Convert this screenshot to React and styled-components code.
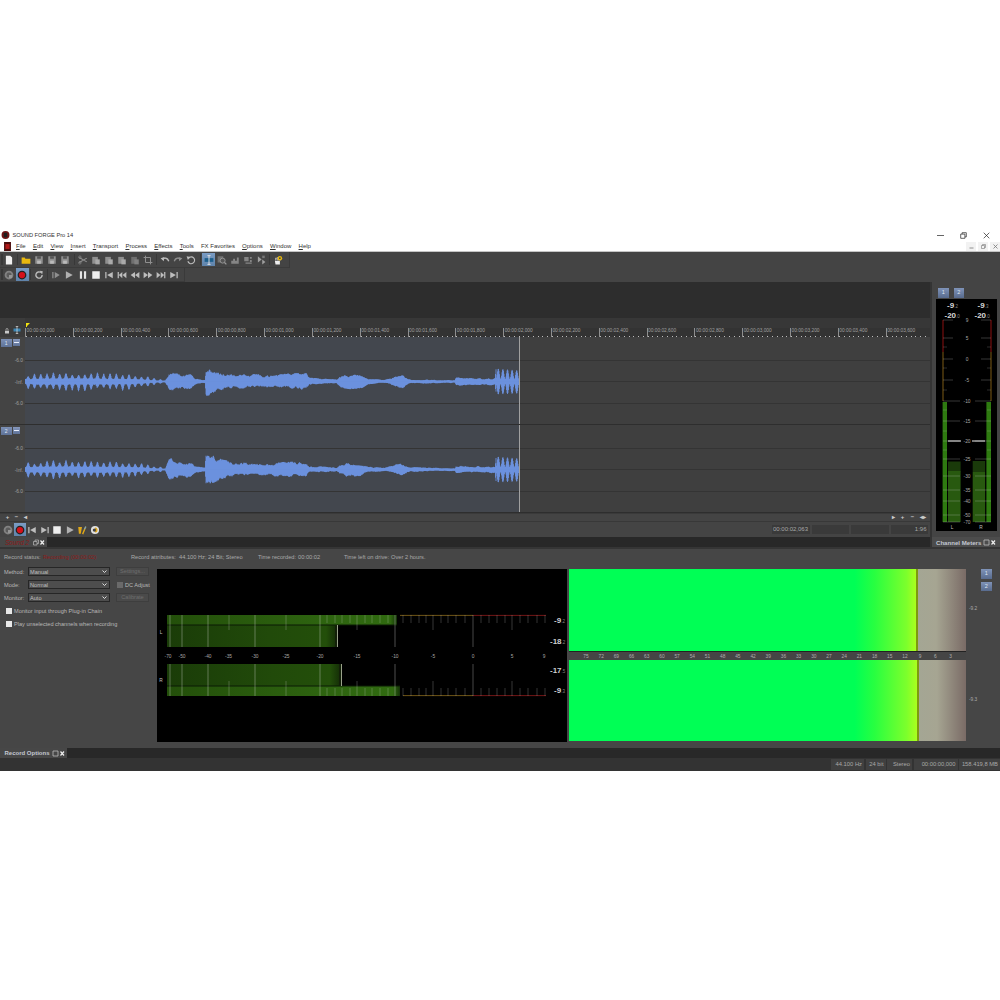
import React from "react";
import styled, { createGlobalStyle } from "styled-components";

const Global = createGlobalStyle`
  html, body { margin: 0; padding: 0; background: #fff; }
  body { font-family: "Liberation Sans", Arial, sans-serif; }
  * { box-sizing: border-box; }
`;

const Page = styled.div`
  width: 1000px; height: 1000px; padding-top: 229px; background: #fff; overflow: hidden;
`;
const TitleBar = styled.div`
  height: 12px; display: flex; align-items: center; padding-left: 1px; color: #333; font-size: 5.7px; gap: 2.5px; position: relative;
`;
const TitleControls = styled.div`
  margin-left: auto; display: flex; height: 100%; align-items: center; padding-right: 2px;
`;
const WinBtn = styled.div`
  width: 23px; display: flex; justify-content: center; align-items: center; color: #222;
`;
const MenuBar = styled.div`
  height: 11px; display: flex; align-items: center; padding-left: 4px; font-size: 6px; color: #333; gap: 7.2px; border-bottom: 1px solid #c4c4c4;
`;
const MenuLogo = styled.svg`
  margin-right: -2.2px; flex: none;
`;
const MenuItem = styled.span`
  line-height: 10px; u { text-decoration-thickness: 0.5px; text-underline-offset: 0.8px; }
`;
const MdiControls = styled.div`
  margin-left: auto; display: flex; gap: 2px;
`;
const MdiBtn = styled.div`
  width: 10px; height: 9px; background: #f2f2f2; display: flex; align-items: center; justify-content: center;
`;
const ToolRow = styled.div`
  height: ${p => p.$h}px; background: #444; display: flex;
`;
const ToolGroup = styled.div`
  display: flex; align-items: center; height: 100%; border-right: 1px solid #3a3a3a; border-bottom: 1px solid #3b3b3b; padding-right: ${p => p.$pr || 0}px;
`;
const Grip = styled.div`
  width: 2px; height: 11px; margin-left: 0.5px; background: #383838;
`;
const ToolBtn = styled.div`
  width: ${p => p.$w || 13.12}px; height: 13px; display: flex; align-items: center; justify-content: center; flex: none;
  background: ${p => (p.$active ? "linear-gradient(#7a9cc4,#5f83aa)" : "transparent")};
`;
const Sep = styled.div`
  width: 1px; height: 11px; margin: 0 1.5px; background: #383838; flex: none;
`;
const MainRow = styled.div`
  height: 265px; display: flex;
`;
const LeftCol = styled.div`
  width: 930px; display: flex; flex-direction: column;
`;
const Overview = styled.div`
  height: 36px; background: #2d2d2d;
`;
const RulerWrap = styled.div`
  height: 19px; display: flex;
`;
const RulerGutter = styled.div`
  width: 25px; background: #3b3b3b; display: flex; align-items: flex-end; justify-content: space-around; padding: 0 2px 3px 2px;
`;
const RulerCol = styled.div`
  flex: 1; display: flex; flex-direction: column; min-width: 0;
`;
const RulerTop = styled.div`
  height: 10px; background: #373737; padding: 5px 0 0 1px; display: flex; align-items: flex-start;
`;
const Ruler = styled.div`
  height: 9px; background-color: #333; display: flex; overflow: hidden;
  background-image: repeating-linear-gradient(90deg, #bdbdbd 0 1px, transparent 1px 4.782px);
  background-size: 100% 1px; background-position: 1px 7.5px; background-repeat: no-repeat;
`;
const RulerCell = styled.div`
  width: 47.82px; flex: none; font-size: 4.8px; color: #a0a0a0; border-left: 1px solid #8f8f8f; height: 8.5px; line-height: 6px; padding-left: 0.5px; white-space: nowrap;
`;
const Track = styled.div`
  height: 88px; display: flex; border-bottom: 1px solid #2e2e2e;
`;
const Gutter = styled.div`
  width: 25px; background: #444; display: flex; flex-direction: column;
`;
const TrackHead = styled.div`
  height: 11px; padding: 1.5px 0 0 1px; display: flex; gap: 1px; align-items: flex-start;
`;
const TrackNum = styled.div`
  width: 10.5px; height: 8.5px; background: linear-gradient(#7c90b6,#5e7297); color: #dfe6f2; font-size: 5px; text-align: center; line-height: 8.5px;
`;
const TrackMin = styled.div`
  width: 7.5px; height: 7px; background: linear-gradient(#8698bd,#5e7297); display: flex; align-items: center; justify-content: center;
  &::after { content: ""; width: 4.5px; height: 1px; background: #e8eef8; }
`;
const DbList = styled.div`
  margin-top: 2px; display: flex; flex-direction: column; align-items: flex-end; padding-right: 2px;
`;
const DbLabel = styled.div`
  height: 21.5px; line-height: 21.5px; font-size: 4.8px; color: #a0a0a0;
`;
const TrackArea = styled.div`
  flex: 1; background: linear-gradient(90deg, #43474e 494px, #3f3f3f 494px); display: flex; min-width: 0;
`;
const ScrollRow = styled.div`
  height: 9px; background: #444; display: flex; align-items: center; padding: 0 3px; color: #ccc; font-size: 6px; font-weight: bold; border-top: 1px solid #3a3a3a; border-bottom: 1px solid #383838;
`;
const ScrollGlyph = styled.span`
  width: ${p => p.$w || 9}px; text-align: center; line-height: 7px; flex: none;
`;
const ScrollSpace = styled.div`
  flex: 1; height: 100%;
`;
const TransportRow = styled.div`
  height: 15px; background: #444; display: flex; align-items: center; padding-left: 2px;
`;
const TimeBoxes = styled.div`
  margin-left: auto; display: flex; gap: 2px; padding-right: 2px;
`;
const TimeBox = styled.div`
  width: ${p => p.$w}px; height: 9px; background: #3a3a3a; font-size: 6px; color: #a8a8a8; line-height: 9px; text-align: right; padding-right: 1.5px;
`;
const TabRow = styled.div`
  height: ${p => p.$h || 10}px; background: #282828; display: flex; flex: none;
`;
const Tab = styled.div`
  width: ${p => p.$w}px; background: #474747; display: flex; align-items: center; padding-left: ${p => p.$pl || 4.5}px; gap: 2.5px; font-size: ${p => p.$fs || 6}px;
  color: ${p => p.$c || "#ccc"}; font-style: ${p => (p.$it ? "italic" : "normal")}; font-weight: ${p => (p.$b ? "bold" : "normal")}; white-space: nowrap;
`;
const RightCol = styled.div`
  width: 70px; background: #444; border-left: 2px solid #343434; display: flex; flex-direction: column;
`;
const MeterBtns = styled.div`
  height: 17px; padding: 6px 0 0 6px; display: flex; gap: 5px;
`;
const NumBtn = styled.div`
  width: 10.5px; height: 9.5px; background: linear-gradient(#7f93b8,#586b8e); color: #dfe6f2; font-size: 5.5px; text-align: center; line-height: 9.5px; flex: none;
`;
const ChannelBox = styled.div`
  margin-left: 4px; width: 61px; height: 232px; background: #000; line-height: 0;
`;
const ChannelTitle = styled(Tab)`
  margin-top: auto; width: 68px; height: 10px; flex: none; color: #c3c8d2; background: #4c4c4c; padding-left: 4px; gap: 2px; font-size: 6.1px;
`;
const RecordPanel = styled.div`
  height: 201px; background: #464646; border-top: 2px solid #353535; display: flex; flex-direction: column;
`;
const RecStatus = styled.div`
  height: 18px; flex: none; display: flex; align-items: center; padding: 0 0 2px 4px; font-size: 5.7px; color: #aaa; white-space: nowrap;
`;
const Stat = styled.span`
  width: ${p => p.$w}px; flex: none; color: ${p => p.$c || "#aaa"};
`;
const RecBody = styled.div`
  flex: 1; display: flex; align-items: flex-start; min-height: 0;
`;
const Form = styled.div`
  width: 157px; flex: none; padding-left: 4px; display: flex; flex-direction: column; gap: 4px; font-size: 5.6px; color: #b8b8b8;
`;
const FormRow = styled.div`
  height: 9px; display: flex; align-items: center;
`;
const FormLabel = styled.span`
  width: 24px; flex: none;
`;
const Select = styled.div`
  width: 82px; height: 9.5px; background: #4d4d4d; border: 1px solid #262626; color: #c0c0c0; display: flex; align-items: center; justify-content: space-between; padding: 0 2px 0 1px; flex: none;
`;
const GhostBtn = styled.div`
  margin-left: 6px; width: 33px; height: 9.5px; background: #4a4a4a; border: 1px solid #3e3e3e; color: #6f6f6f; text-align: center; line-height: 7.5px; flex: none;
`;
const Check = styled.div`
  width: 6px; height: 6px; background: ${p => (p.$dark ? "#6a6a6a" : "#e8e8e8")}; flex: none;
`;
const DcWrap = styled.div`
  margin-left: 7px; display: flex; align-items: center; gap: 2px;
`;
const CheckRow = styled.div`
  height: 9px; display: flex; align-items: center; gap: 2px; padding-left: 2px;
`;
const LevelBox = styled.div`
  width: 410px; height: 173px; background: #000; margin-top: 2px; flex: none; line-height: 0;
`;
const GreenBlock = styled.div`
  width: 397px; margin: 2px 0 0 2px; flex: none; display: flex; flex-direction: column;
`;
const GreenBar = styled.div`
  height: ${p => p.$h}px;
  background: linear-gradient(90deg, #00ff55 0, #00ff55 72%, #28ff40 77%, #7cff2c 85%, #aaff1e ${p => p.$e}px, #7d9a10 ${p => p.$e}px, #7d9a10 ${p => p.$e + 2}px, #a4a694 ${p => p.$e + 2}px, #a6a592 ${p => p.$e + 20}px, #7a6b66 100%);
`;
const ScaleRow = styled.div`
  height: 9px; border-top: 1px solid #222; display: flex; padding-left: 9.4px; font-size: 4.8px; color: #b0b0b0; line-height: 9px; background: #454545;
`;
const ScaleCell = styled.span`
  width: 15.2px; flex: none; text-align: center;
`;
const SideCol = styled.div`
  flex: 1; margin-top: 2px; display: flex; flex-direction: column; position: relative; padding-left: 15px; gap: 3px;
`;
const SideValue = styled.div`
  font-size: 4.8px; color: #aaa; position: absolute; left: 3px; top: ${p => p.$t}px;
`;
const BottomBar = styled.div`
  height: 13px; background: #333; display: flex; justify-content: flex-end; align-items: center; gap: 1.5px;
`;
const StatusCell = styled.div`
  width: ${p => p.$w}px; height: 11px; background: #404040; font-size: 5.8px; color: #a8a8a8; text-align: right; line-height: 11px; padding-right: 2px; white-space: nowrap;
`;

/* ---------- icons ---------- */
const Ico = ({ s = 10, children }) => (
  <svg width={s} height={s} viewBox="0 0 16 16">{children}</svg>
);
const G = "#8f8f8f";
const L = "#bdbdbd";
const Save = () => <Ico><path d="M2 2h12v12H2z" fill={G} /><path d="M5 2h6v4H5z" fill="#555" /><path d="M5 9h6v5H5z" fill="#bbb" /></Ico>;
const Paste = ({ dim }) => <Ico><path d="M2 3h9v11H2z" fill={dim ? "#6f6f6f" : G} /><path d="M7 7h7v8H7z" fill={dim ? "#808080" : "#aaa"} /></Ico>;
const Small = ({ d }) => <Ico><path d={d} fill="#858585" /></Ico>;
const Play = ({ c = L }) => <Ico><path d="M3 2l11 6-11 6z" fill={c} /></Ico>;
const BarPlay = () => <Ico><path d="M2 3h2v10H2zM6 3l8 5-8 5z" fill={G} /></Ico>;
const Pause = () => <Ico><path d="M3 2h3.5v12H3zM9.5 2H13v12H9.5z" fill="#e4e4e4" /></Ico>;
const Stop = () => <Ico><path d="M2 2h12v12H2z" fill="#eee" /></Ico>;
const Skip = ({ d }) => <Ico><path d={d} fill={L} /></Ico>;
const P = {
  first: "M2 3h2v10H2zM14 3v10L5 8z",
  last: "M12 3h2v10h-2zM2 3v10l9-5z",
  prevM: "M1 3h2v10H1zM8.5 3v10L3 8zM15 3v10L9 8z",
  rew: "M8 3v10L1 8zM15 3v10L8 8z",
  ff: "M1 3v10l7-5zM8 3v10l7-5z",
  nextM: "M15 3h-2v10h2zM7.5 3v10L13 8zM1 3v10l6-5z",
};
const Disc = () => <Ico s={10}><circle cx="8" cy="8" r="7" fill="#828282" /><circle cx="8" cy="8" r="4" fill="#5b5b5b" /><path d="M8 8h5v5H8z" fill="#969696" /></Ico>;
const Rec = () => <Ico s={10}><circle cx="8" cy="8" r="7" fill="#222" /><circle cx="8" cy="8" r="5" fill="#d4101a" /></Ico>;
const Loop = () => <Ico><path d="M13 8a5 5 0 1 1-2-4" fill="none" stroke={L} strokeWidth="2.2" /><path d="M9 1l5 1-1 5z" fill={L} /></Ico>;

const rnd = seed => { let s = seed; return () => (s = (s * 16807) % 2147483647) / 2147483647; };
const ENV = [
  [25, 8, 8], [40, 9, 10], [70, 10, 10], [100, 9, 10], [130, 8, 9], [145, 6, 6], [155, 3.5, 3.5], [166, 2.5, 2.5],
  [169, 9, 9], [173, 12, 9], [178, 8, 9], [190, 7, 7], [195, 3, 3], [205, 1.6, 1.6], [206, 14, 13], [214, 13, 12],
  [222, 9, 8.5], [235, 7, 6.5], [255, 7, 6], [270, 5.5, 6], [285, 7, 6.5], [306, 8, 7.5], [309, 3.5, 3], [325, 2.5, 2.5],
  [337, 1.8, 1.8], [340, 5.5, 5.5], [350, 6.5, 7], [362, 5.5, 6], [368, 2.5, 2.5], [385, 1.5, 1.5], [392, 3.5, 3.5], [402, 6, 6.5],
  [410, 2.2, 2.2], [430, 1.6, 1.6], [455, 1.4, 1.4], [456, 4, 4], [470, 3, 3], [495, 3, 3.5], [496, 13, 13], [519, 11, 12],
];
const envAt = x => {
  for (let i = 1; i < ENV.length; i++) {
    if (x <= ENV[i][0]) {
      const [a, u0, d0] = ENV[i - 1]; const [b, u1, d1] = ENV[i];
      const t = (x - a) / (b - a);
      return [u0 + (u1 - u0) * t, d0 + (d1 - d0) * t];
    }
  }
  return [0, 0];
};
const wavePath = (seed, cy) => {
  const r = rnd(seed);
  const spikesU = Array.from({ length: 40 }, () => 0.45 + 0.55 * r());
  const spikesD = Array.from({ length: 40 }, () => 0.4 + 0.6 * r());
  let d = "";
  let walkU = 0.9, walkD = 0.9;
  for (let x = 25; x < 519; x += 0.5) {
    const [u, l] = envAt(x);
    let mu, md;
    if (x < 166) {
      const pos = (x - 25) / 6.3;
      const k = Math.floor(pos);
      const ph = Math.abs(Math.sin(Math.PI * pos));
      const shape = Math.pow(ph, 5);
      mu = 0.26 + 0.07 * r() + 0.69 * shape * spikesU[k];
      md = 0.26 + 0.07 * r() + 0.69 * shape * spikesD[k + 1 > 39 ? 39 : k + 1];
    } else if (x > 496) {
      const ph = Math.abs(Math.sin((Math.PI * (x - 496)) / 4.6));
      mu = md = 0.2 + 0.8 * ph * ph;
    } else {
      walkU = Math.min(1.1, Math.max(0.66, walkU + (r() - 0.5) * 0.26));
      walkD = Math.min(1.1, Math.max(0.66, walkD + (r() - 0.5) * 0.26));
      mu = walkU; md = walkD;
    }
    d += `M${(x - 25).toFixed(1)} ${(cy - u * mu).toFixed(1)}V${(cy + l * md).toFixed(1)}`;
  }
  return d;
};
const Wave = ({ seed, lines }) => (
  <svg width="905" height="87" viewBox="0 0 905 87">
    {lines.map(y => <path key={y} d={`M0 ${y}H905`} stroke="#343434" strokeWidth="1" />)}
    <path d={wavePath(seed, 44.5)} stroke="#6e98ea" strokeWidth="0.8" fill="none" />
    <path d="M494.5 0V87" stroke="#a0a0a0" strokeWidth="1" />
  </svg>
);

const FONT = "Liberation Sans, sans-serif";

const ChannelMeter = () => {
  const scale = [["9", 320], ["5", 338], ["0", 359], ["-5", 380], ["-10", 401], ["-15", 421], ["-20", 441], ["-25", 459], ["-30", 476], ["-35", 490], ["-40", 501], ["-50", 515], ["-70", 522]];
  return (
    <svg width="61" height="232" viewBox="936 299 61 232" fontFamily={FONT}>
      {[[947, ".2"], [977.5, ".3"]].map(([x, b]) => (
        <text key={x} x={x} y="307.5" fontSize="8" fill="#d8d8d8" fontWeight="bold">-9<tspan fontSize="4.5" fill="#888" fontWeight="normal">{b}</tspan></text>
      ))}
      {[944.5, 974.5].map(x => (
        <text key={x} x={x} y="318" fontSize="8" fill="#d8d8d8" fontWeight="bold">-20<tspan fontSize="4.5" fill="#888" fontWeight="normal">.0</tspan></text>
      ))}
      <path d="M943 320V352M991 320V352" stroke="#8c1010" strokeWidth="1" />
      <path d="M943 352V401M991 352V401" stroke="#7d5a14" strokeWidth="1" />
      <rect x="942.6" y="402" width="4.4" height="120" fill="#2e7a10" />
      <rect x="986.4" y="402" width="4.6" height="120" fill="#2e7a10" />
      <rect x="948" y="461.5" width="12.6" height="10" fill="#1a3a0a" />
      <rect x="948" y="471" width="12.6" height="51" fill="#28590f" />
      <rect x="972.7" y="461" width="12.4" height="11" fill="#1a3a0a" />
      <rect x="972.7" y="472" width="12.4" height="50" fill="#28590f" />
      {scale.map(([t, y]) => (
        <g key={t}>
          <path d={`M943 ${y}H${t.length > 2 ? 960 : 953}M991 ${y}H${t.length > 2 ? 975 : 981}`} stroke="#cfcfcf" strokeOpacity=".45" strokeWidth=".6" />
          <text x="967" y={y + 1.7} fontSize="4.8" fill="#a8a8a8" textAnchor="middle">{t}</text>
        </g>
      ))}
      {[347, 368, 390, 410, 431, 450].map(y => (
        <path key={y} d={`M943 ${y}H947M991 ${y}H987`} stroke="#bbb" strokeOpacity=".45" strokeWidth=".5" />
      ))}
      <path d="M948 441H961M972 441H985" stroke="#f0f0f0" strokeWidth="1.1" />
      <text x="952" y="529" fontSize="4.8" fill="#bbb" textAnchor="middle">L</text>
      <text x="981" y="529" fontSize="4.8" fill="#bbb" textAnchor="middle">R</text>
    </svg>
  );
};

const LabelsH = [["-70", 168], ["-50", 182], ["-40", 208], ["-35", 228.5], ["-30", 255], ["-25", 286], ["-20", 320], ["-15", 357], ["-10", 395], ["-5", 433], ["0", 473], ["5", 512], ["9", 544]];
const tallX = [170, 182, 208, 255, 320, 395, 473];
const shortX = [229, 286, 357, 433, 512];
const fineL = [327, 335, 342, 350, 365, 372, 380, 388];
const fineR = [403, 411, 419, 426, 441, 448, 456, 465, 481, 489, 497, 505, 520, 528, 537, 545];

const MeterPair = ({ y0, flip, peakX, bandX }) => {
  const peakY = flip ? y0 + 22 : y0;
  const bandY = flip ? y0 : y0 + 10;
  const edgeY = flip ? y0 + 31.6 : y0 + 0.4;
  const tickA = flip ? y0 + 32 : y0;
  const dir = flip ? -1 : 1;
  return (
    <g>
      <rect x="167" y={peakY} width={peakX - 167} height="10" fill="url(#gp)" />
      <rect x="167" y={bandY} width={bandX - 167} height="22" fill="url(#gb)" />
      <path d={`M167 ${flip ? y0 + 22 : y0 + 10}H${peakX}`} stroke="#0b1a04" strokeWidth="1" />
      <path d={`M${peakX + 3} ${edgeY}H473`} stroke="#8a6a1c" strokeWidth=".8" />
      <path d={`M473 ${edgeY}H546`} stroke="#8e1c1c" strokeWidth=".8" />
      {tallX.map(x => <path key={x} d={`M${x} ${tickA}v${dir * 32}`} stroke="#e0e0e0" strokeOpacity={x > 395 ? 0.45 : 0.5} strokeWidth=".7" />)}
      {shortX.map(x => <path key={x} d={`M${x} ${tickA}v${dir * 15}`} stroke="#e0e0e0" strokeOpacity=".35" strokeWidth=".7" />)}
      {fineL.concat(fineR).map(x => <path key={x} d={`M${x} ${tickA}v${dir * 8}`} stroke="#e0e0e0" strokeOpacity=".38" strokeWidth=".6" />)}
      <rect x={bandX - 3} y={bandY} width="3" height="22" fill="#121f08" />
      <path d={`M${bandX - 0.5} ${bandY}v22`} stroke="#a9b09a" strokeWidth=".9" />
    </g>
  );
};

const Value = ({ x, y, a, b }) => (
  <text x={x} y={y} fontSize="8" fill="#cfcfcf" fontWeight="bold">{a}<tspan fontSize="4.5" fill="#888" fontWeight="normal">{b}</tspan></text>
);

const LevelMeter = () => (
  <svg width="410" height="173" viewBox="157 569 410 173" fontFamily={FONT}>
    <defs>
      <linearGradient id="gp" x1="0" x2="1" y1="0" y2="0">
        <stop offset="0" stopColor="#234f0a" /><stop offset=".7" stopColor="#2e6410" /><stop offset=".97" stopColor="#306a10" /><stop offset="1" stopColor="#143208" />
      </linearGradient>
      <linearGradient id="gb" x1="0" x2="1" y1="0" y2="0">
        <stop offset="0" stopColor="#1a3c08" /><stop offset=".6" stopColor="#214a0a" /><stop offset=".93" stopColor="#234f0a" /><stop offset="1" stopColor="#122806" />
      </linearGradient>
    </defs>
    <MeterPair y0={615} peakX={397} bandX={338} />
    <MeterPair y0={664} flip peakX={400} bandX={342} />
    {LabelsH.map(([t, x]) => <text key={t} x={x} y="657.5" fontSize="4.8" fill="#a8a8a8" textAnchor="middle">{t}</text>)}
    <text x="161" y="634" fontSize="4.8" fill="#c0c0c0" textAnchor="middle">L</text>
    <text x="161" y="682" fontSize="4.8" fill="#c0c0c0" textAnchor="middle">R</text>
    <Value x={554} y={623} a="-9" b=".2" />
    <Value x={550} y={643.5} a="-18" b=".2" />
    <Value x={550} y={673} a="-17" b=".5" />
    <Value x={554} y={693} a="-9" b=".3" />
  </svg>
);

const Chevron = () => (
  <svg width="5" height="4" viewBox="0 0 10 8"><path d="M1 1l4 4 4-4" fill="none" stroke="#ddd" strokeWidth="2" /></svg>
);
const TabIcons = ({ restore }) => (
  <svg width="13" height="7" viewBox="0 0 26 14">
    {restore
      ? <path d="M3 5h7v7H3zM6 5V2h7v7h-3" fill="none" stroke="#bbb" strokeWidth="1.4" />
      : <path d="M2 2h10v10H2z" fill="none" stroke="#bbb" strokeWidth="1.6" />}
    <path d="M17 3l7 8M24 3l-7 8" stroke="#eee" strokeWidth="2.4" />
  </svg>
);

const menu = [["F", "ile"], ["E", "dit"], ["V", "iew"], ["I", "nsert"], ["T", "ransport", 1], ["P", "rocess"], ["E", "ffects"], ["T", "ools"], ["FX Favorites", ""], ["O", "ptions"], ["W", "indow"], ["H", "elp"]];
const rulerLabels = ["00:00:00,000", "00:00:00,200", "00:00:00,400", "00:00:00,600", "00:00:00,800", "00:00:01,000", "00:00:01,200", "00:00:01,400", "00:00:01,600", "00:00:01,800", "00:00:02,000", "00:00:02,200", "00:00:02,400", "00:00:02,600", "00:00:02,800", "00:00:03,000", "00:00:03,200", "00:00:03,400", "00:00:03,600"];
const scaleNums = [75, 72, 69, 66, 63, 60, 57, 54, 51, 48, 45, 42, 39, 36, 33, 30, 27, 24, 21, 18, 15, 12, 9, 6, 3];

export default function App() {
  return (
    <Page>
      <Global />
      <TitleBar>
        <svg width="9" height="8" viewBox="0 0 16 14"><circle cx="8" cy="7" r="7" fill="#6e1414" /><path d="M5 3h6v8H5z" fill="#1d1d1d" /></svg>
        SOUND FORGE Pro 14
        <TitleControls>
          <WinBtn><svg width="7" height="7" viewBox="0 0 10 10"><path d="M0 5h10" stroke="#222" strokeWidth="1" /></svg></WinBtn>
          <WinBtn><svg width="7" height="7" viewBox="0 0 10 10"><path d="M1 3h6v6H1zM3 3V1h6v6H7" fill="none" stroke="#222" strokeWidth="1" /></svg></WinBtn>
          <WinBtn><svg width="7" height="7" viewBox="0 0 10 10"><path d="M1 1l8 8M9 1l-8 8" stroke="#222" strokeWidth="1" /></svg></WinBtn>
        </TitleControls>
      </TitleBar>
      <MenuBar>
        <MenuLogo width="7" height="9" viewBox="0 0 10 13"><path d="M0 0h10v13H0z" fill="#4a0d0d" /><path d="M2 3h6v7H2z" fill="#b01a1a" /></MenuLogo>
        {menu.map(([a, b]) => (
          <MenuItem key={a + b}>{b ? <><u>{a}</u>{b}</> : a}</MenuItem>
        ))}
        <MdiControls>
          <MdiBtn><svg width="5" height="5" viewBox="0 0 10 10"><path d="M1 8h8" stroke="#777" strokeWidth="1.6" /></svg></MdiBtn>
          <MdiBtn><svg width="5" height="5" viewBox="0 0 10 10"><path d="M1 3h6v6H1zM3 3V1h6v6H7" fill="none" stroke="#777" strokeWidth="1.2" /></svg></MdiBtn>
          <MdiBtn><svg width="5" height="5" viewBox="0 0 10 10"><path d="M1 1l8 8M9 1l-8 8" stroke="#777" strokeWidth="1.6" /></svg></MdiBtn>
        </MdiControls>
      </MenuBar>

      <ToolRow $h={16}>
        <ToolGroup $pr={4}>
          <Grip />
          <ToolBtn><Ico><path d="M3 1h7l3 3v11H3z" fill="#f0f0f0" /></Ico></ToolBtn>
          <Sep />
          <ToolBtn><Ico><path d="M1 4h5l1 2h8v8H1z" fill="#e8b810" /></Ico></ToolBtn>
          <ToolBtn><Save /></ToolBtn>
          <ToolBtn><Save /></ToolBtn>
          <ToolBtn><Save /></ToolBtn>
          <Sep />
          <ToolBtn><Ico><path d="M2 4l12 7M2 12l12-7" stroke={G} strokeWidth="1.8" /><circle cx="3" cy="3.5" r="2" fill="none" stroke={G} /><circle cx="3" cy="12.5" r="2" fill="none" stroke={G} /></Ico></ToolBtn>
          <ToolBtn><Paste /></ToolBtn>
          <ToolBtn><Paste /></ToolBtn>
          <ToolBtn><Paste /></ToolBtn>
          <ToolBtn><Paste dim /></ToolBtn>
          <ToolBtn><Ico><path d="M4 1v11h11M1 4h11v11" fill="none" stroke={G} strokeWidth="1.6" /></Ico></ToolBtn>
          <Sep />
          <ToolBtn><Ico><path d="M4 7c3-3 8-3 10 3" fill="none" stroke={L} strokeWidth="2.2" /><path d="M1 5l6-2-1 7z" fill={L} /></Ico></ToolBtn>
          <ToolBtn><Ico><path d="M12 7C9 4 4 4 2 10" fill="none" stroke={G} strokeWidth="2.2" /><path d="M15 5L9 3l1 7z" fill={G} /></Ico></ToolBtn>
          <ToolBtn><Ico><path d="M4 5a5.5 5.5 0 1 1-1 5" fill="none" stroke={L} strokeWidth="1.8" /><path d="M1 2l6 1-4 5z" fill={L} /></Ico></ToolBtn>
          <Sep />
          <ToolBtn $active><Ico><path d="M1 5h14v6H1z" fill="#1d5f8c" /><path d="M8 1v14M5.5 1h5M5.5 15h5" stroke="#e8e8e8" strokeWidth="1.4" /></Ico></ToolBtn>
          <ToolBtn><Ico><path d="M1 2h9v10H1z" fill="#707070" /><circle cx="9" cy="9" r="4" fill="#555" stroke="#999" strokeWidth="1.4" /><path d="M12 12l3 3" stroke="#999" strokeWidth="2" /></Ico></ToolBtn>
          <ToolBtn><Small d="M2 14V9h3V6h3v3h3V4h3v10z" /></ToolBtn>
          <ToolBtn><Small d="M2 3h7v7H2zM11 3h3v3h-3zM11 8h3v3h-3zM4 12h10v2H4z" /></ToolBtn>
          <ToolBtn><Ico><path d="M3 2l6 5-6 5zM10 7l5 4-5 4z" fill="#a0a0a0" /><path d="M10 1h4v4h-4z" fill="#777" /></Ico></ToolBtn>
          <Sep />
          <ToolBtn><Ico><path d="M3 9h8v6H4z" fill="#eee" /><path d="M4 9V5h2v4M7 9V4h2v5M10 9V5h1.5v4" stroke="#eee" /><circle cx="11" cy="5" r="3.6" fill="#e8b90f" /><circle cx="11" cy="5" r="1.4" fill="#444" /></Ico></ToolBtn>
        </ToolGroup>
      </ToolRow>
      <ToolRow $h={14}>
        <ToolGroup $pr={3}>
          <Grip />
          <ToolBtn><Disc /></ToolBtn>
          <ToolBtn $active><Rec /></ToolBtn>
          <Sep />
          <ToolBtn><Loop /></ToolBtn>
          <Sep />
          <ToolBtn><BarPlay /></ToolBtn>
          <ToolBtn><Play c="#b0b0b0" /></ToolBtn>
          <ToolBtn><Pause /></ToolBtn>
          <ToolBtn><Stop /></ToolBtn>
          <ToolBtn><Skip d={P.first} /></ToolBtn>
          <ToolBtn><Skip d={P.prevM} /></ToolBtn>
          <ToolBtn><Skip d={P.rew} /></ToolBtn>
          <ToolBtn><Skip d={P.ff} /></ToolBtn>
          <ToolBtn><Skip d={P.nextM} /></ToolBtn>
          <ToolBtn><Skip d={P.last} /></ToolBtn>
        </ToolGroup>
      </ToolRow>

      <MainRow>
        <LeftCol>
          <Overview />
          <RulerWrap>
            <RulerGutter>
              <svg width="6" height="6" viewBox="0 0 12 12"><path d="M2 6h8v5H2z" fill="#c8c8c8" /><path d="M4 6V3a2 2 0 0 1 4 0v3" fill="none" stroke="#c8c8c8" strokeWidth="1.4" /></svg>
              <svg width="8" height="8" viewBox="0 0 16 16"><path d="M1 5h14v6H1z" fill="#3d87b5" /><path d="M8 1v14M5.5 1h5M5.5 15h5" stroke="#ddd" strokeWidth="1.4" /></svg>
            </RulerGutter>
            <RulerCol>
              <RulerTop>
                <svg width="4" height="4" viewBox="0 0 8 8"><path d="M0 0h8L2 6v2H0z" fill="#f2e210" /></svg>
              </RulerTop>
              <Ruler>
                {rulerLabels.map(t => <RulerCell key={t}>{t}</RulerCell>)}
              </Ruler>
            </RulerCol>
          </RulerWrap>
          {[1, 2].map(n => (
            <Track key={n}>
              <Gutter>
                <TrackHead>
                  <TrackNum>{n}</TrackNum>
                  <TrackMin />
                </TrackHead>
                <DbList>
                  <DbLabel>-6.0</DbLabel>
                  <DbLabel>-Inf.</DbLabel>
                  <DbLabel>-6.0</DbLabel>
                </DbList>
              </Gutter>
              <TrackArea>
                <Wave seed={n === 1 ? 4711 : 90210} lines={[23.5, 44.5, 66.5]} />
              </TrackArea>
            </Track>
          ))}
          <ScrollRow>
            <ScrollGlyph>+</ScrollGlyph>
            <ScrollGlyph>−</ScrollGlyph>
            <ScrollGlyph>◂</ScrollGlyph>
            <ScrollSpace />
            <ScrollGlyph>▸</ScrollGlyph>
            <ScrollGlyph>+</ScrollGlyph>
            <ScrollGlyph $w={11}>−</ScrollGlyph>
            <ScrollGlyph>◂▸</ScrollGlyph>
          </ScrollRow>
          <TransportRow>
            <ToolBtn $w={12}><Disc /></ToolBtn>
            <ToolBtn $active $w={12}><Rec /></ToolBtn>
            <ToolBtn $w={12.5}><Skip d={P.first} /></ToolBtn>
            <ToolBtn $w={12.5}><Skip d={P.last} /></ToolBtn>
            <ToolBtn $w={12.5}><Stop /></ToolBtn>
            <ToolBtn $w={12.5}><Play c="#b0b0b0" /></ToolBtn>
            <ToolBtn $w={12.5}><Ico><path d="M2 3h6l-2 11H3zM8 14l5-12 2 1-5 12z" fill="#e0a818" /><path d="M11 6l3-4 1 1-3 4z" fill="#5c9ce0" /></Ico></ToolBtn>
            <ToolBtn $w={12.5}><Ico><circle cx="8" cy="8" r="6.5" fill="#e0e0e0" /><path d="M8 4a4 4 0 0 1 0 8z" fill="#e0a818" /><circle cx="7" cy="8" r="2.6" fill="#444" /></Ico></ToolBtn>
            <TimeBoxes>
              <TimeBox $w={37.5}>00:00:02,063</TimeBox>
              <TimeBox $w={37.5} />
              <TimeBox $w={37.5} />
              <TimeBox $w={37.5}>1:96</TimeBox>
            </TimeBoxes>
          </TransportRow>
          <TabRow>
            <Tab $w={47} $it $c="#8c1a1a" $pl={5} $fs={6.5}>Sound 2<TabIcons restore /></Tab>
          </TabRow>
        </LeftCol>
        <RightCol>
          <MeterBtns>
            <NumBtn>1</NumBtn>
            <NumBtn>2</NumBtn>
          </MeterBtns>
          <ChannelBox><ChannelMeter /></ChannelBox>
          <ChannelTitle $w={68} $b>Channel Meters<TabIcons /></ChannelTitle>
        </RightCol>
      </MainRow>

      <RecordPanel>
        <RecStatus>
          <Stat $w={39}>Record status:</Stat>
          <Stat $w={88} $c="#8e1b1b">Recording (00:00:02)</Stat>
          <Stat $w={48}>Record attributes:</Stat>
          <Stat $w={79}>44.100 Hz; 24 Bit; Stereo</Stat>
          <Stat $w={40}>Time recorded:</Stat>
          <Stat $w={46}>00:00:02</Stat>
          <Stat $w={47}>Time left on drive:</Stat>
          <Stat $w={60}>Over 2 hours.</Stat>
        </RecStatus>
        <RecBody>
          <Form>
            <FormRow>
              <FormLabel>Method:</FormLabel>
              <Select>Manual<Chevron /></Select>
              <GhostBtn>Settings...</GhostBtn>
            </FormRow>
            <FormRow>
              <FormLabel>Mode:</FormLabel>
              <Select>Normal<Chevron /></Select>
              <DcWrap><Check $dark />DC Adjust</DcWrap>
            </FormRow>
            <FormRow>
              <FormLabel>Monitor:</FormLabel>
              <Select>Auto<Chevron /></Select>
              <GhostBtn>Calibrate</GhostBtn>
            </FormRow>
            <CheckRow><Check />Monitor input through Plug-in Chain</CheckRow>
            <CheckRow><Check />Play unselected channels when recording</CheckRow>
          </Form>
          <LevelBox><LevelMeter /></LevelBox>
          <GreenBlock>
            <GreenBar $h={82} $e={347} />
            <ScaleRow>{scaleNums.map(n => <ScaleCell key={n}>{n}</ScaleCell>)}</ScaleRow>
            <GreenBar $h={81} $e={348} />
          </GreenBlock>
          <SideCol>
            <NumBtn>1</NumBtn>
            <NumBtn>2</NumBtn>
            <SideValue $t={37}>-9.2</SideValue>
            <SideValue $t={128}>-9.3</SideValue>
          </SideCol>
        </RecBody>
      </RecordPanel>
      <TabRow>
        <Tab $w={67} $b $c="#c3c8d2">Record Options<TabIcons /></Tab>
      </TabRow>
      <BottomBar>
        <StatusCell $w={33}>44.100 Hz</StatusCell>
        <StatusCell $w={20}>24 bit</StatusCell>
        <StatusCell $w={25}>Stereo</StatusCell>
        <StatusCell $w={44}>00:00:00,000</StatusCell>
        <StatusCell $w={41}>158.419,8 MB</StatusCell>
      </BottomBar>
    </Page>
  );
}
